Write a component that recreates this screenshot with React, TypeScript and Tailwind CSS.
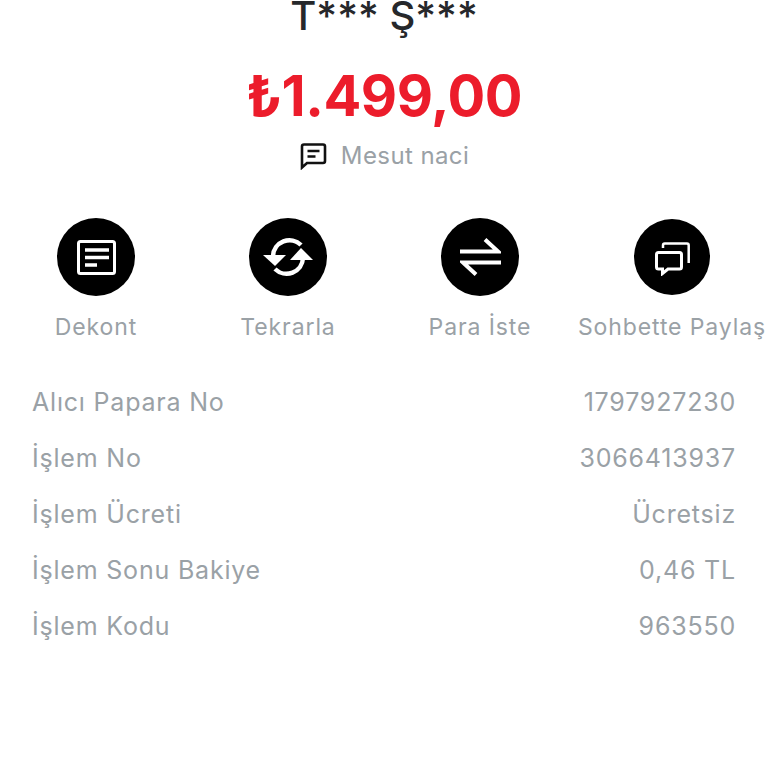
import React from 'react';

const actions = [
  { label: 'Dekont', icon: 'receipt' },
  { label: 'Tekrarla', icon: 'repeat' },
  { label: 'Para İste', icon: 'swap' },
  { label: 'Sohbette Paylaş', icon: 'chat' },
];

const rows = [
  ['Alıcı Papara No', '1797927230'],
  ['İşlem No', '3066413937'],
  ['İşlem Ücreti', 'Ücretsiz'],
  ['İşlem Sonu Bakiye', '0,46 TL'],
  ['İşlem Kodu', '963550'],
];

const ActionIcon = ({ name }: { name: string }) => {
  if (name === 'receipt') {
    return (
      <svg width="39" height="35" viewBox="0 0 39 35" fill="none" stroke="white">
        <rect x="1.500" y="1.500" width="36" height="32" rx="2" strokeWidth="3" />
        <path d="M8 10h24M8 17.500h24M8 25h12" strokeWidth="3.400" />
      </svg>
    );
  }
  if (name === 'repeat') {
    return (
      <svg width="50" height="40" viewBox="0 0 50 40" fill="none">
        <path d="M10 19A16.500 16.500 0 0 1 38 8" stroke="white" strokeWidth="4.500" />
        <path d="M40 21A16.500 16.500 0 0 1 12 32" stroke="white" strokeWidth="4.500" />
        <path d="M0 18h23L12 29z" fill="white" />
        <path d="M27 23h23L38 11z" fill="white" />
      </svg>
    );
  }
  if (name === 'swap') {
    return (
      <svg width="41" height="38" viewBox="0 0 41 38" fill="none" stroke="white" strokeWidth="4">
        <path d="M0 13.500h38L25 1.500" />
        <path d="M41 24.500H3l13 12" />
      </svg>
    );
  }
  return (
    <svg width="35" height="34" viewBox="0 0 35 34" fill="none" stroke="white" className="mt-[3px]">
      <path d="M8 6V3.200c0-1 .7-1.700 1.700-1.700H32c1 0 1.700.7 1.700 1.700V21" strokeWidth="2.500" />
      <path d="M3.500 10.500h21c1.100 0 2 .9 2 2V25c0 1.100-.9 2-2 2H13l-5.500 4.500V27h-4c-1.100 0-2-.9-2-2V12.500c0-1.100.9-2 2-2z" strokeWidth="3" />
    </svg>
  );
};

export default function App() {
  return (
    <div className="w-[768px] h-[768px] bg-white overflow-hidden font-['Inter',sans-serif]">
      <div className="flex flex-col items-center -mt-[8px]">
        <div className="text-[40px] leading-[48px] text-[#26282b] font-medium">T*** Ş***</div>
        <div className="mt-[22px] text-[56px] leading-[68px] font-bold text-[#ec1c2b] tracking-[-0.5px]">₺1.499,00</div>
        <div className="mt-[11px] flex items-center gap-[14px]">
          <svg width="28" height="28" viewBox="0 0 28 28" fill="none" stroke="#111" strokeWidth="2.600">
            <path d="M3 25.500V4.500C3 3.400 3.900 2.500 5 2.500h19c1.100 0 2 .9 2 2v14.500c0 1.100-.9 2-2 2H8z" />
            <path d="M8.500 9h12M8.500 14.500h8" />
          </svg>
          <span className="text-[24px] leading-[30px] tracking-[0.4px] text-[#9aa1a6]">Mesut naci</span>
        </div>
      </div>

      <div className="mt-[47px] grid grid-cols-4">
        {actions.map((a) => (
          <div key={a.label} className="flex flex-col items-center">
            <div className="h-[78px] flex items-center">
              <div
                className={
                  a.icon === 'chat'
                    ? 'w-[76px] h-[76px] rounded-full bg-black flex items-center justify-center'
                    : 'w-[78px] h-[78px] rounded-full bg-black flex items-center justify-center'
                }
              >
                <ActionIcon name={a.icon} />
              </div>
            </div>
            <div className="mt-[17px] text-[23px] leading-[28px] tracking-[0.9px] whitespace-nowrap text-[#9aa1a6]">{a.label}</div>
          </div>
        ))}
      </div>

      <div className="mt-[44px] px-[32px] flex flex-col gap-[22px]">
        {rows.map(([k, v]) => (
          <div key={k} className="flex justify-between text-[25px] leading-[34px] tracking-[0.8px] text-[#9aa1a6]">
            <span>{k}</span>
            <span>{v}</span>
          </div>
        ))}
      </div>
    </div>
  );
}
